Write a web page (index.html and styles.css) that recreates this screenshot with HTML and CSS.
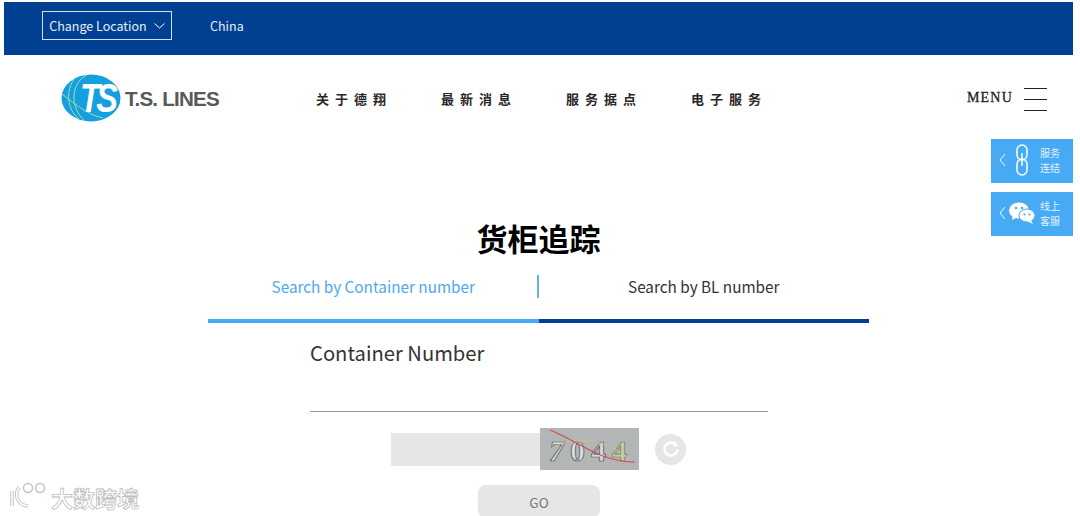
FILE: index.html
```html
<!DOCTYPE html>
<html lang="zh">
<head>
    <meta charset="UTF-8">
    <title>货柜追踪</title>
    <link rel="stylesheet" href="styles.css">
</head>
<body>

<div class="topbar">
    <button class="location-btn">Change Location
        <svg class="chevron" width="11" height="6" viewBox="0 0 11 6"><path d="M0.500 0.500 L5.500 5 L10.500 0.500" fill="none" stroke="#fff" stroke-width="1"/></svg>
    </button>
    <span class="country">China</span>
</div>

<header class="mainnav">
    <a class="logo">
        <svg width="60" height="48" viewBox="0 0 60 48">
            <ellipse cx="30" cy="24" rx="29.500" ry="23.500" fill="#14a0e0"/>
            <path d="M26 1 C10 8 8 34 24 47" fill="none" stroke="#a8dc9c" stroke-width="1"/>
            <path d="M1 20 C12 28 24 40 42 44" fill="none" stroke="#a8dc9c" stroke-width="1"/>
            <path d="M14 4 C4 16 6 36 18 45" fill="none" stroke="#a8dc9c" stroke-width="1"/>
            <text class="logo-ts" transform="translate(19 38) scale(0.9 1.15)">TS</text>
        </svg>
        <span class="logo-name">T.S. LINES</span>
    </a>
    <nav class="menu-links">
        <a>关于德翔</a>
        <a>最新消息</a>
        <a>服务据点</a>
        <a>电子服务</a>
    </nav>
    <div class="menu-toggle">
        <span>MENU</span>
        <div class="burger"><i></i><i></i><i></i></div>
    </div>
</header>

<aside class="side-tabs">
    <div class="side-tab">
        <svg class="side-arrow" width="7" height="14" viewBox="0 0 7 14"><path d="M6 1 L1 7 L6 13" fill="none" stroke="#fff" stroke-width="1"/></svg>
        <svg class="side-icon" width="26" height="32" viewBox="0 0 26 32">
            <rect x="8" y="1" width="10" height="15" rx="5" fill="none" stroke="#fff" stroke-width="1.500"/>
            <rect x="8" y="15" width="10" height="16" rx="5" fill="none" stroke="#fff" stroke-width="1.500"/>
            <path d="M13 9 V22" stroke="#fff" stroke-width="1.500"/>
        </svg>
        <span>服务<br>连结</span>
    </div>
    <div class="side-tab">
        <svg class="side-arrow" width="7" height="14" viewBox="0 0 7 14"><path d="M6 1 L1 7 L6 13" fill="none" stroke="#fff" stroke-width="1"/></svg>
        <svg class="side-icon" width="26" height="22" viewBox="0 0 26 22">
            <ellipse cx="10" cy="8.500" rx="10" ry="8" fill="#fff"/>
            <path d="M4 13 L3 18 L9 15 Z" fill="#fff"/>
            <ellipse cx="18" cy="13.500" rx="8" ry="6.500" stroke="#46aaf5" fill="#fff"/>
            <path d="M22 18 L24 22 L18 19 Z" fill="#fff"/>
            <circle cx="7" cy="6" r="1.300" fill="#46aaf5"/>
            <circle cx="13" cy="6" r="1.300" fill="#46aaf5"/>
            <circle cx="15.500" cy="12.500" r="1.100" fill="#46aaf5"/>
            <circle cx="20.500" cy="12.500" r="1.100" fill="#46aaf5"/>
        </svg>
        <span>线上<br>客服</span>
    </div>
</aside>

<main class="tracking">
    <h1>货柜追踪</h1>
    <div class="tabs">
        <button class="tab tab-active">Search by Container number</button>
        <button class="tab">Search by BL number</button>
    </div>
    <form class="track-form">
        <label class="field-label">Container Number</label>
        <div class="field-line"></div>
        <div class="captcha-row">
            <div class="captcha-input"></div>
            <div class="captcha-img">
                <span class="digit-seven">7</span><span>0</span><span>4</span><span class="digit-green">4</span>
                <svg class="captcha-noise" width="99" height="42" viewBox="0 0 99 42">
                    <path d="M0 28 C25 6 60 8 88 30" fill="none" stroke="#d2b98c" stroke-width="1"/>
                    <path d="M10 2 C40 14 60 34 95 34" fill="none" stroke="#cf4a50" stroke-width="1.200"/>
                </svg>
            </div>
            <div class="refresh">
                <svg width="18" height="18" viewBox="0 0 18 18"><path d="M15.500 9 A6.500 6.500 0 1 1 13 3.900" fill="none" stroke="#fff" stroke-width="2.500"/><path d="M12 0.500 L17 6 L10.500 6.500 Z" fill="#fff"/></svg>
            </div>
        </div>
        <button class="go-btn">GO</button>
    </form>
</main>

<div class="watermark">
    <svg width="40" height="28" viewBox="0 0 40 28">
        <path d="M4 10 L4 25 M11 6 C6 14 9 24 20 25" fill="none" stroke="#c4c4c4" stroke-width="3.500"/>
        <path d="M4 10 L4 25 M11 6 C6 14 9 24 20 25" fill="none" stroke="#fff" stroke-width="1.500"/>
        <circle cx="20" cy="7" r="4.500" fill="none" stroke="#c4c4c4" stroke-width="1.500"/>
        <circle cx="32" cy="7" r="4.500" fill="none" stroke="#c4c4c4" stroke-width="1.500"/>
    </svg>
    <span>大数跨境</span>
</div>

</body>
</html>
```

FILE: styles.css
```css
* {
    margin: 0;
    padding: 0;
    box-sizing: border-box;
    font-family: "Noto Sans CJK SC", "Noto Sans", sans-serif;
}

html, body {
    height: 516px;
    overflow: hidden;
}

body {
    background-color: #fff;
    padding: 2px 7px 0 4px;
    position: relative;
}

.topbar {
    background-color: #004092;
    height: 53px;
    display: flex;
    align-items: center;
    padding: 0 0 6px 38px;
    color: #e8eef6;
    font-size: 12.500px;
}

.location-btn {
    width: 130px;
    height: 29px;
    border: 1px solid #d5e0ee;
    background: none;
    color: #e8eef6;
    font-size: 12.500px;
    display: flex;
    align-items: center;
    justify-content: center;
    gap: 7px;
}

.country {
    margin-left: 38px;
}

.mainnav {
    height: 84px;
    display: flex;
    align-items: center;
    padding: 2px 26px 0 57px;
}

.logo {
    width: 158px;
    display: flex;
    align-items: center;
    gap: 4px;
    flex-shrink: 0;
}

.logo-ts {
    font-family: "Liberation Sans", sans-serif;
    font-size: 36px;
    font-weight: bold;
    font-style: italic;
    fill: #fff;
    letter-spacing: -4px;
}

.logo-name {
    font-family: "Liberation Sans", sans-serif;
    font-size: 20.600px;
    font-weight: bold;
    color: #58595b;
    letter-spacing: -0.800px;
    white-space: nowrap;
    padding-top: 2px;
}

.menu-links {
    display: flex;
    gap: 53px;
    margin-left: 97px;
}

.menu-links a {
    font-size: 13px;
    font-weight: 700;
    letter-spacing: 6px;
    color: #2b2525;
    white-space: nowrap;
    width: 72px;
}

.menu-toggle {
    margin-left: auto;
    display: flex;
    align-items: center;
    gap: 11px;
}

.menu-toggle span {
    font-family: "Liberation Serif", serif;
    font-size: 14px;
    letter-spacing: 1.200px;
    color: #222;
    -webkit-text-stroke: 0.300px #222;
}

.burger {
    width: 23px;
    margin-top: 2px;
    display: flex;
    flex-direction: column;
    gap: 10px;
}

.burger i {
    display: block;
    height: 1px;
    background-color: #222;
}

.side-tabs {
    position: absolute;
    top: 139px;
    right: 7px;
    display: flex;
    flex-direction: column;
    gap: 9px;
}

.side-tab {
    width: 82px;
    height: 44px;
    background-color: #46aaf5;
    display: flex;
    align-items: center;
    padding: 0 0 2px 8px;
    color: #e6f3fe;
    font-size: 10px;
    line-height: 15px;
}

.side-arrow {
    flex-shrink: 0;
}

.side-icon {
    margin-left: 3px;
    flex-shrink: 0;
}

.side-tab span {
    margin-left: 5px;
}

.tracking {
    display: flex;
    flex-direction: column;
    align-items: center;
    padding-top: 77px;
}

.tracking h1 {
    font-size: 31px;
    line-height: 44px;
    font-weight: 700;
    color: #000;
}

.tabs {
    width: 661px;
    height: 59px;
    margin-top: 4px;
    display: flex;
    border-bottom: 4px solid #004092;
}

.tab {
    flex: 1;
    border: none;
    border-bottom: 4px solid transparent;
    background: none;
    font-size: 15.300px;
    color: #333;
    height: 59px;
    padding-bottom: 12px;
}

.tab-active {
    color: #4fa8ee;
    border-bottom-color: #46aaf5;
    position: relative;
}

.tab-active::after {
    content: "";
    position: absolute;
    right: 0;
    top: 11px;
    height: 23px;
    width: 2px;
    background-color: #6aaee0;
}

.track-form {
    width: 458px;
    margin-left: 1px;
    display: flex;
    flex-direction: column;
    align-items: center;
}

.field-label {
    align-self: flex-start;
    font-size: 20.200px;
    line-height: 28px;
    margin-top: 16px;
    color: #333;
}

.field-line {
    width: 100%;
    height: 1px;
    background-color: #999;
    margin-top: 44px;
}

.captcha-row {
    display: flex;
    align-items: center;
    margin-top: 16px;
    align-self: flex-start;
    margin-left: 81px;
}

.captcha-input {
    width: 149px;
    height: 33px;
    background-color: #e6e6e6;
}

.captcha-img {
    width: 99px;
    height: 42px;
    background-color: #b3b6b7;
    position: relative;
    display: flex;
    align-items: center;
    padding: 3px 0 0 9px;
    gap: 6px;
    font-size: 30px;
    color: #d8dcdc;
    -webkit-text-stroke: 0.700px #4a4a4a;
}

.captcha-img span {
    font-family: "Liberation Serif", serif;
    font-weight: 700;
}

.digit-seven {
    font-style: italic;
}

.digit-green {
    color: #c3cfa8;
    -webkit-text-stroke-color: #6f7a5a;
}

.captcha-noise {
    position: absolute;
    top: 0;
    left: 0;
}

.refresh {
    width: 31px;
    height: 31px;
    border-radius: 50%;
    background-color: #e6e6e6;
    margin-left: 16px;
    display: flex;
    align-items: center;
    justify-content: center;
}

.go-btn {
    width: 122px;
    height: 33px;
    margin-top: 15px;
    border: none;
    border-radius: 8px;
    background-color: #e6e6e6;
    color: #777;
    font-size: 13.500px;
}

.watermark {
    position: absolute;
    left: 8px;
    top: 478px;
    display: flex;
    align-items: center;
    gap: 3px;
}

.watermark span {
    font-size: 22px;
    line-height: 28px;
    font-weight: 700;
    color: #fff;
    -webkit-text-stroke: 0.800px #bdbdbd;
    margin-top: 5px;
}
```
